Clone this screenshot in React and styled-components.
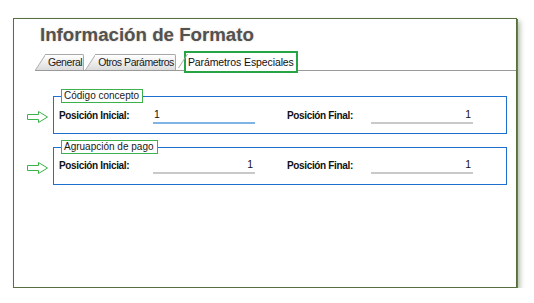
import React from "react";
import styled, { createGlobalStyle } from "styled-components";

const Global = createGlobalStyle`
  html, body { margin: 0; padding: 0; background: #ffffff; }
  body { font-family: "Liberation Sans", Arial, sans-serif; }
`;

const Page = styled.div`
  padding: 18px 0 0 13px;
`;

const Frame = styled.div`
  width: 502px;
  height: 268px;
  border: 1px solid #56703f;
  background: #fff;
  box-shadow: 1px 1px 0 #667c55, 3px 3px 5px rgba(85, 110, 60, 0.45);
  display: flex;
  flex-direction: column;
`;

const Title = styled.h1`
  margin: 5px 0 0 26px;
  font-family: "Liberation Sans", Arial, sans-serif;
  font-weight: bold;
  font-size: 18.7px;
  line-height: 22px;
  color: #525252;
  text-shadow: 0 0 2px rgba(140, 105, 40, 0.35);
`;

const TabBar = styled.div`
  margin: 4px 0 0 21px;
  height: 20px;
  display: flex;
  align-items: flex-end;
  border-bottom: 1px solid #9a9a9a;
`;

const Tab = styled.div`
  position: relative;
  height: 16px;
  box-sizing: border-box;
  padding: 0 2px 0 13px;
  margin-right: 1px;
  font-size: 10.5px;
  letter-spacing: -0.45px;
  line-height: 16px;
  color: #1a1a1a;
  z-index: 0;
  &::before {
    content: "";
    position: absolute;
    left: 0;
    top: 0;
    bottom: 0;
    width: 16px;
    background: linear-gradient(#ffffff, #dcdcdc);
    border-left: 1px solid #a8a8a8;
    border-top: 1px solid #a8a8a8;
    transform: skewX(-33deg);
    transform-origin: bottom left;
    z-index: -1;
  }
  &::after {
    content: "";
    position: absolute;
    left: 10px;
    right: 0;
    top: 0;
    bottom: 0;
    background: linear-gradient(#ffffff, #dcdcdc);
    border-top: 1px solid #a8a8a8;
    border-right: 1px solid #a8a8a8;
    border-top-right-radius: 2px;
    z-index: -1;
  }
`;

const ActiveTab = styled.div`
  position: relative;
  z-index: 1;
  margin-left: 7px;
  margin-bottom: -3px;
  height: 22px;
  box-sizing: border-box;
  padding: 0 2px;
  border: 2px solid #27a444;
  background: #fff;
  font-size: 10.5px;
  letter-spacing: -0.1px;
  line-height: 18px;
  color: #111;
  &::before {
    content: "";
    position: absolute;
    left: -8px;
    bottom: 3px;
    width: 1px;
    height: 14px;
    background: #a8a8a8;
    transform: skewX(-33deg);
    transform-origin: bottom left;
  }
`;

const Sections = styled.div`
  margin-top: 18px;
  display: flex;
  flex-direction: column;
  gap: 6px;
`;

const Section = styled.div`
  display: flex;
  align-items: flex-start;
  padding-left: 13px;
`;

const ArrowBox = styled.div`
  width: 22px;
  height: 12px;
  margin-top: ${(p) => p.$top}px;
  margin-right: 4px;
  flex: none;
`;

const Group = styled.fieldset`
  margin: 0;
  width: 454px;
  box-sizing: border-box;
  border: 1px solid #1f6fcf;
  padding: ${(p) => p.$pt}px 0 ${(p) => p.$pb}px 5px;
`;

const Legend = styled.legend`
  margin-left: 2px;
  padding: 0 3px 0 2px;
  border: 1px solid #3cb34a;
  font-size: 10px;
  line-height: 12px;
  color: #1a1a1a;
`;

const Row = styled.div`
  display: grid;
  grid-template-columns: 94px 102px 32px 84px 102px;
  align-items: center;
  height: 18px;
`;

const Label = styled.span`
  font-weight: bold;
  font-size: 10px;
  letter-spacing: -0.35px;
  color: #111;
  grid-column: ${(p) => p.$col};
`;

const Field = styled.input`
  grid-column: ${(p) => p.$col};
  box-sizing: border-box;
  height: 18px;
  width: 102px;
  margin: 0;
  border: none;
  border-bottom: 2px solid ${(p) => (p.$focus ? "#80b4e6" : "#c9c9c9")};
  outline: none;
  background: transparent;
  font-family: "Liberation Sans", Arial, sans-serif;
  font-size: 10.5px;
  color: #111;
  text-align: ${(p) => (p.$focus ? "left" : "right")};
  padding: 0 2px 0 1px;
`;

const Arrow = ({ top }) => (
  <ArrowBox $top={top}>
    <svg width="22" height="12" viewBox="0 0 22 12">
      <path
        d="M0.5 3.5 H11.5 V0.5 L20.5 6 L11.5 11.5 V8.5 H0.5 Z"
        fill="#fff"
        stroke="#3cb34a"
        strokeWidth="1"
        strokeLinejoin="miter"
      />
    </svg>
  </ArrowBox>
);

const ParamGroup = ({ legend, focusFirst, pt, pb }) => (
  <Section>
    <Arrow top={20} />
    <Group $pt={pt} $pb={pb}>
      <Legend>{legend}</Legend>
      <Row>
        <Label $col={1}>Posición Inicial:</Label>
        <Field $col={2} $focus={focusFirst} value="1" readOnly />
        <Label $col={4}>Posición Final:</Label>
        <Field $col={5} value="1" readOnly />
      </Row>
    </Group>
  </Section>
);

export default function App() {
  return (
    <>
      <Global />
      <Page>
        <Frame>
          <Title>Información de Formato</Title>
          <TabBar>
            <Tab>General</Tab>
            <Tab>Otros Parámetros</Tab>
            <ActiveTab>Parámetros Especiales</ActiveTab>
          </TabBar>
          <Sections>
            <ParamGroup legend="Código concepto" focusFirst pt={3} pb={9} />
            <ParamGroup legend="Agruapción de pago" pt={2} pb={10} />
          </Sections>
        </Frame>
      </Page>
    </>
  );
}
